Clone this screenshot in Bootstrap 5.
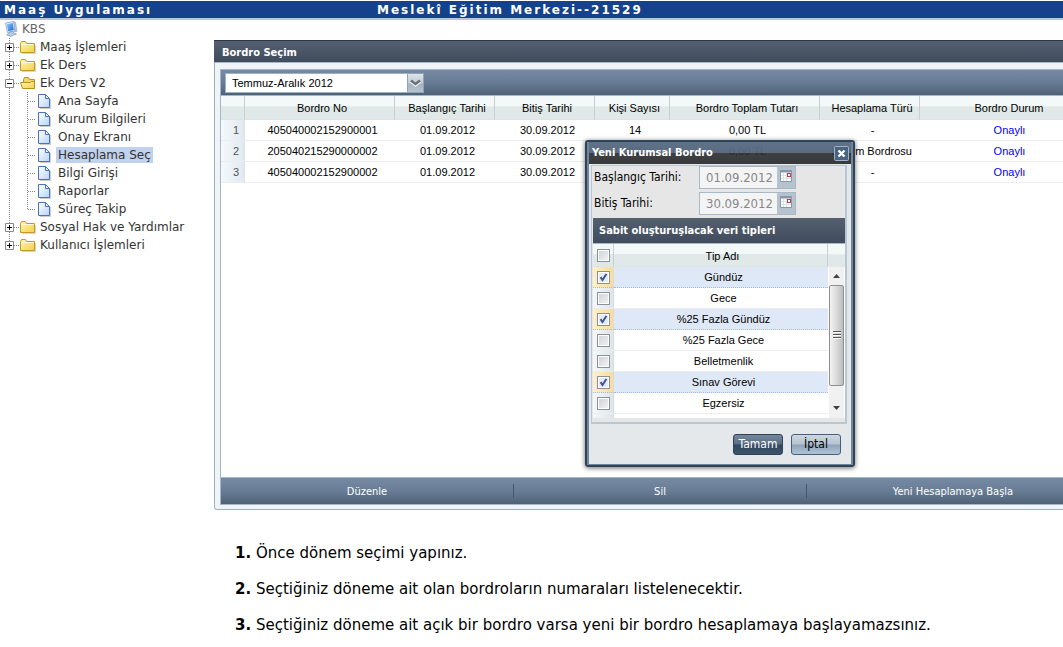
<!DOCTYPE html>
<html lang="tr">
<head>
<meta charset="utf-8">
<meta name="viewport" content="width=device-width, initial-scale=1">
<title>Maaş Uygulaması</title>
<link href="https://cdn.jsdelivr.net/npm/bootstrap@5.3.0/dist/css/bootstrap.min.css" rel="stylesheet">
<style>
:root{--wide:"DejaVu Sans",Verdana,sans-serif;--ui:"DejaVu Sans Condensed",Tahoma,sans-serif;--grid:"Liberation Sans",Arial,sans-serif}
body{font:12px/18px var(--wide);color:#333;background:#fff;overflow-x:hidden}
.topbar{margin-top:1px;height:19px;background:#15428b;border-bottom:2px solid #b5c7e2;color:#fff;font-weight:700;letter-spacing:2px;line-height:19px;padding-left:4px}
.topbar>*{flex:1 1 0;white-space:nowrap}
.topbar>.app-title{flex:0 0 373px}
/* tree menu */
.side{width:214px;flex:none;padding:0 0 0 2px}
.side ul{list-style:none;margin:0;padding:0}
.side a{color:#333;text-decoration:none;white-space:nowrap;line-height:14px}
.side .node a.root{color:#666;margin-left:0}
.node{height:18px;display:flex;align-items:center}
.node svg{flex:none}
.node a{margin-left:2px;padding:0 2px}
.side ul ul a{margin-left:4px}
.node a.current{background:#c1d2ee;padding:1px 2px}
/* panel */
.main{min-width:0;flex:1;overflow:hidden}
.panel{min-width:892px;margin-top:20px;background:#eff4f9;border:1px solid #9fb0bc;border-top:0;border-radius:2px 2px 3px 3px;position:relative;font-family:var(--ui);font-size:11px}
.bar-dark{background:linear-gradient(#54606f,#404c5d);color:#fff;font-weight:700;font-size:11px;margin:0}
.panel-head{height:23px;line-height:23px;padding-left:8px;border-top:1px solid #29394b;border-bottom:1px solid #a3b7c8;margin:0 -1px}
.inner{margin:6px 5px 4px;border:1px solid #a3b7c8;background:#fff}
.bar{background:linear-gradient(#768ba3,#687d95 50%,#4e6177)}
.tools{height:26px;padding:3px 4px;border-bottom:1px solid #a3b7c8}
.combo{width:199px;height:20px;position:relative}
.combo select{width:100%;height:20px;border:1px solid #9db2c3;border-radius:0;background:#fff;font:11px/18px var(--grid);color:#000;padding:0 20px 0 6px;appearance:none}
.combo .trigger{position:absolute;right:0;top:0;width:17px;height:20px;pointer-events:none}
.grid-table{table-layout:fixed;width:100%;margin:0;font:11px/20px var(--grid);color:#000;text-align:center;border-collapse:separate;border-spacing:0}
.grid-table th{height:24px;padding:1px 0 0 5px;font-weight:400;background:linear-gradient(#f3f8f8 45%,#e0e9e7 46%);border-right:1px solid #c9ced1;border-bottom:1px solid #dde4e6}
.grid-table td{height:21px;padding:0 0 0 5px;border-bottom:1px solid #ebedef;white-space:nowrap}
.grid-table .num{background:linear-gradient(90deg,#f5f9fc,#e1e9ef);border-right:1px solid #dbe2e8;color:#555;padding-left:7px}
.grid-table td a{color:#00f;text-decoration:none}
.payrolls th:nth-child(1){width:24px}
.payrolls th:nth-child(2),.payrolls th:nth-child(6){width:150px}
.payrolls th:nth-child(3),.payrolls th:nth-child(4),.payrolls th:nth-child(7){width:100px}
.payrolls th:nth-child(5){width:75px}
.payrolls th:last-child,.payrolls td:last-child{padding:0}
.grid-body{height:381px}
.foot{height:27px;border-top:1px solid #a3b7c8;display:flex;align-items:center}
.foot button{flex:1 1 0;height:14px;line-height:13px;border:0;background:none;color:#fff;padding:0}
.foot button:not(:last-child){border-right:1px solid #42566c}
/* dialog */
.dlg{position:absolute;left:370px;top:100px;width:270px;border:2px solid #304459;border-radius:3px;color:#000;box-shadow:0 1px 5px #0009}
.dlg-frame{border:solid #71869d;border-width:0 2px 1px}
.dlg-head{height:22px;background:linear-gradient(#5e7188,#53657af2 48%,#2a2d31e8 52%,#262626e8);color:#fff;font-weight:700;padding:0 2px 0 3px}
.dlg-head h2{font-size:11px;font-weight:700;margin:0}
.dlg-head button{border:0;padding:0;background:none;width:15px;height:15px;display:flex}
.dlg-main{background:#e4e8eb;padding-top:1px}
.dlg-body{margin:0 4px 0 2px;border:solid #b9c7d3;border-width:1px 2px 2px 1px;background:#e6e6e6;padding:0 0 4px 1px}
.field{height:26px;padding-left:1px}
.field label{width:105px;font-size:12px;line-height:22px;flex:none}
.date-box{width:97px;height:23px;border:1px solid #a9b8c5;background:#f4f4f4}
.date-box input{width:77px;border:0;background:none;color:#888;font:13px/20px var(--ui);padding:1px 0 0 6px}
.date-box .cal{width:18px;background:#b6c2cd;display:flex;justify-content:center;padding-top:2px}
.sub-head{height:26px;line-height:25px;padding-left:6px;border-bottom:1px solid #a3b7c8}
.types{height:174px;overflow:hidden;background:#fff;display:flex;align-items:stretch}
.types-list{width:235px;flex:none;overflow:hidden}
.types .grid-table th{height:23px;padding:1px 0 0 4px}
.types .grid-table th:first-child,.types .grid-table td:first-child{width:21px;padding:0}
.types .grid-table td:first-child{background:linear-gradient(90deg,#f5f8fa,#dde5eb);border-right:1px solid #d5dce2}
.types tr.on td{background:#dfe8f6;border-bottom:1px dotted #a3bae9}
.types .grid-table tr.on td:first-child{background:linear-gradient(90deg,#fdf0cd,#f9dc9a)}
.types input{appearance:none;width:13px;height:13px;border:1px solid #8b9197;background:linear-gradient(135deg,#cdd1d6,#f4f4f4);box-shadow:inset 0 0 0 1px #fff;display:block;margin:1px auto 0;border-radius:0}
.types input:checked{background:url("data:image/svg+xml,%3Csvg xmlns='http://www.w3.org/2000/svg' viewBox='0 0 11 11'%3E%3Cpath d='M2.5 5.2 4.5 8 8.4 2' fill='none' stroke='%233f5791' stroke-width='2'/%3E%3C/svg%3E") #e7ebf2}
.scroll-col{flex:1;display:flex;flex-direction:column}
.scroll-cap{height:23px;flex:none;background:linear-gradient(#f3f8f8 45%,#e0e9e7 46%)}
.track{flex:1;background:#f1f1f1;display:flex;flex-direction:column;margin:0 1px 0 1px}
.track svg{flex:none;margin:auto}
.thumb{height:101px;flex:none;border:1px solid #8f8f8f;border-radius:2px;background:linear-gradient(90deg,#f4f4f4,#dadada 50%,#bdbdbd);display:flex;align-items:center}
.arrow{height:18px;flex:none;display:flex}
.arrow.down{height:32px;align-items:end;padding-bottom:8px}
.arrow.down svg{margin:0 auto}
.dlg-foot{height:40px;padding:0 10px 0 0}
.dlg-foot button{width:50px;height:21px;border:1px solid #2e4358;border-radius:3px;font:12px/18px var(--ui);padding:0;color:#fff;background:linear-gradient(#74879c,#586d84 48%,#33485e 52%,#3c536b)}
.dlg-foot button.cancel{color:#000;border-color:#46607c;background:linear-gradient(#cdd7e1,#b5c3d1 48%,#8fa4b9 52%,#b0c3d6)}
.steps{padding:34px 0 0 21px;font:15px/18px var(--wide);color:#000}
.steps p{margin:0 0 18px}
</style>
</head>
<body>
<svg width="0" height="0" class="position-absolute" aria-hidden="true">
<defs>
<linearGradient id="gf" x2="1" y2="1"><stop stop-color="#fff7b0"/><stop offset="1" stop-color="#f5cf4c"/></linearGradient>
<linearGradient id="gp" x2="1" y2="1"><stop stop-color="#fff"/><stop offset="1" stop-color="#b9d3f8"/></linearGradient>
<linearGradient id="gs" x2="1" y2="1"><stop stop-color="#8fd0ff"/><stop offset="1" stop-color="#1a62d0"/></linearGradient>
<symbol id="folder" viewBox="0 0 16 16"><path d="M2 14.500h13.500V6" fill="none" stroke="#c4b88e" opacity=".6"/><path d="M.5 4.500 1.500 2.500h4l1 2h8v9H.5z" fill="url(#gf)" stroke="#c29a2b"/><path d="M1.500 5.500h12" stroke="#fffbd8"/></symbol>
<symbol id="folder-open" viewBox="0 0 16 16"><path d="M3.500 13V4.500l1-2h4l1 2h5V13z" fill="#f4d568" stroke="#b98f24"/><path d="M.5 7.500h10l1-1h3v7h-12z" fill="url(#gf)" stroke="#b98f24"/></symbol>
<symbol id="page" viewBox="0 0 16 16"><path d="M4 15.500h10.500V6" fill="none" stroke="#999" opacity=".5"/><path d="M2.500 1.500h7l4 4v9h-11z" fill="url(#gp)" stroke="#4a74b8"/><path d="M9.500 1.500v4h4z" fill="#e9f2ff" stroke="#4a74b8"/></symbol>
<symbol id="plus" viewBox="0 0 18 18"><path d="M7.500 0v18M12 9.500h6" stroke="#888" stroke-dasharray="1 1"/><path d="M3.500 5.500h8v8h-8z" fill="#fff" stroke="#888"/><path d="M5 9.500h5M7.500 7v5" stroke="#000"/></symbol>
<symbol id="plus-last" viewBox="0 0 18 18"><path d="M7.500 0v9M12 9.500h6" stroke="#888" stroke-dasharray="1 1"/><path d="M3.500 5.500h8v8h-8z" fill="#fff" stroke="#888"/><path d="M5 9.500h5M7.500 7v5" stroke="#000"/></symbol>
<symbol id="minus" viewBox="0 0 18 18"><path d="M7.500 0v18M12 9.500h6" stroke="#888" stroke-dasharray="1 1"/><path d="M3.500 5.500h8v8h-8z" fill="#fff" stroke="#888"/><path d="M5 9.500h5" stroke="#000"/></symbol>
<symbol id="branch" viewBox="0 0 36 18"><path d="M7.500 0v18M25.500 0v18M26 9.500h10" stroke="#888" stroke-dasharray="1 1"/></symbol>
<symbol id="branch-last" viewBox="0 0 36 18"><path d="M7.500 0v18M25.500 0v10M26 9.500h10" stroke="#888" stroke-dasharray="1 1"/></symbol>
<symbol id="cal" viewBox="0 0 14 14"><path d="M1.500 1.500h11v11h-11z" fill="#fff" stroke="#8998a8"/><path d="M1 2.500h12" stroke="#8998a8" stroke-width="2"/><path d="M4.500 4v8M7.500 4v8M2 6.500h10M2 9.500h10" stroke="#dde2e8"/><rect x="8.500" y="4.500" width="3" height="3" fill="#fff" stroke="#b5433f"/></symbol>
</defs>
</svg>

<header class="topbar d-flex"><span class="app-title">Maaş Uygulaması</span><span>Meslekî Eğitim Merkezi--21529</span></header>

<div class="d-flex">
<nav class="side">
<ul>
<li class="node"><svg width="18" height="16" viewBox="0 0 18 16"><path d="m11 .5 2.500.8 1.500 9-2.500.7z" fill="#b9c5d3" stroke="#93a5b9" stroke-width=".6"/><path d="M3.500 2.200 11.500.5l1.300 9.300-7.300 1.700z" fill="#e6eef8" stroke="#7fa5d2" stroke-width=".8"/><path d="M4.800 3.200 10.700 2l1 7-5.400 1.300z" fill="url(#gs)"/><path d="m8 11 3-.7.8 1.700 2.700 1-6 2.500-4-1.600z" fill="#b7cbe2" stroke="#7393b5" stroke-width=".6"/></svg><a class="root" href="#">KBS</a></li>
<li class="node"><svg width="18" height="18"><use href="#plus"/></svg><svg width="16" height="16"><use href="#folder"/></svg><a href="#">Maaş İşlemleri</a></li>
<li class="node"><svg width="18" height="18"><use href="#plus"/></svg><svg width="16" height="16"><use href="#folder"/></svg><a href="#">Ek Ders</a></li>
<li><div class="node"><svg width="18" height="18"><use href="#minus"/></svg><svg width="16" height="16"><use href="#folder-open"/></svg><a href="#">Ek Ders V2</a></div>
<ul>
<li class="node"><svg width="34" height="18"><use href="#branch" width="36" height="18"/></svg><svg width="16" height="16"><use href="#page"/></svg><a href="#">Ana Sayfa</a></li>
<li class="node"><svg width="34" height="18"><use href="#branch" width="36" height="18"/></svg><svg width="16" height="16"><use href="#page"/></svg><a href="#">Kurum Bilgileri</a></li>
<li class="node"><svg width="34" height="18"><use href="#branch" width="36" height="18"/></svg><svg width="16" height="16"><use href="#page"/></svg><a href="#">Onay Ekranı</a></li>
<li class="node"><svg width="34" height="18"><use href="#branch" width="36" height="18"/></svg><svg width="16" height="16"><use href="#page"/></svg><a class="current" href="#">Hesaplama Seç</a></li>
<li class="node"><svg width="34" height="18"><use href="#branch" width="36" height="18"/></svg><svg width="16" height="16"><use href="#page"/></svg><a href="#">Bilgi Girişi</a></li>
<li class="node"><svg width="34" height="18"><use href="#branch" width="36" height="18"/></svg><svg width="16" height="16"><use href="#page"/></svg><a href="#">Raporlar</a></li>
<li class="node"><svg width="34" height="18"><use href="#branch-last" width="36" height="18"/></svg><svg width="16" height="16"><use href="#page"/></svg><a href="#">Süreç Takip</a></li>
</ul></li>
<li class="node"><svg width="18" height="18"><use href="#plus"/></svg><svg width="16" height="16"><use href="#folder"/></svg><a href="#">Sosyal Hak ve Yardımlar</a></li>
<li class="node"><svg width="18" height="18"><use href="#plus-last"/></svg><svg width="16" height="16"><use href="#folder"/></svg><a href="#">Kullanıcı İşlemleri</a></li>
</ul>
</nav>

<main class="main">
<section class="panel">
<h1 class="bar-dark panel-head">Bordro Seçim</h1>
<div class="inner">
<div class="bar tools"><div class="combo"><select aria-label="Dönem"><option>Temmuz-Aralık 2012</option></select>
<svg class="trigger" viewBox="0 0 17 20"><defs><linearGradient id="gt" y2="1" x2="0"><stop stop-color="#dfe6ea"/><stop offset=".5" stop-color="#c0cbd4"/><stop offset=".55" stop-color="#a3b3c1"/><stop offset="1" stop-color="#b9c6d0"/></linearGradient></defs><path d="M.5.5h16v19H.5z" fill="url(#gt)" stroke="#8fa5b6"/><path d="M4 8.500 8.500 12 13 8.500" fill="none" stroke="#eef2f5" stroke-width="3"/><path d="M4 7.500 8.500 11 13 7.500" fill="none" stroke="#6d7175" stroke-width="2.500"/></svg></div></div>
<div class="grid-body">
<table class="grid-table payrolls">
<thead><tr><th></th><th>Bordro No</th><th>Başlangıç Tarihi</th><th>Bitiş Tarihi</th><th>Kişi Sayısı</th><th>Bordro Toplam Tutarı</th><th>Hesaplama Türü</th><th>Bordro Durum</th></tr></thead>
<tbody>
<tr><td class="num">1</td><td>405040002152900001</td><td>01.09.2012</td><td>30.09.2012</td><td>14</td><td>0,00 TL</td><td>-</td><td><a href="#">Onaylı</a></td></tr>
<tr><td class="num">2</td><td>205040215290000002</td><td>01.09.2012</td><td>30.09.2012</td><td>17</td><td>0,00 TL</td><td class="text-end pe-2">Durum Bordrosu</td><td><a href="#">Onaylı</a></td></tr>
<tr><td class="num">3</td><td>405040002152900002</td><td>01.09.2012</td><td>30.09.2012</td><td></td><td></td><td>-</td><td><a href="#">Onaylı</a></td></tr>
</tbody>
</table>
</div>
<div class="bar foot"><button type="button">Düzenle</button><button type="button">Sil</button><button type="button">Yeni Hesaplamaya Başla</button></div>
</div>

<div class="dlg" role="dialog" aria-labelledby="dlgTitle">
<div class="dlg-frame">
<div class="dlg-head d-flex align-items-center justify-content-between"><h2 id="dlgTitle">Yeni Kurumsal Bordro</h2>
<button type="button" aria-label="Kapat"><svg width="15" height="15" viewBox="0 0 15 15"><rect x=".5" y=".5" width="14" height="14" rx="1" fill="#4a6480" stroke="#9cb3c9"/><path d="m4.500 4.500 6 6m0-6-6 6" stroke="#fff" stroke-width="2.400"/></svg></button></div>
<div class="dlg-main">
<div class="dlg-body">
<div class="field d-flex align-items-start"><label for="d1">Başlangıç Tarihi:</label><div class="date-box d-flex"><input id="d1" type="text" value="01.09.2012" disabled><span class="cal"><svg width="14" height="14"><use href="#cal"/></svg></span></div></div>
<div class="field d-flex align-items-start"><label for="d2">Bitiş Tarihi:</label><div class="date-box d-flex"><input id="d2" type="text" value="30.09.2012" disabled><span class="cal"><svg width="14" height="14"><use href="#cal"/></svg></span></div></div>
<h3 class="bar-dark sub-head">Sabit oluşturuşlacak veri tipleri</h3>
<div class="types">
<div class="types-list">
<table class="grid-table">
<thead><tr><th><input type="checkbox" aria-label="Tümü"></th><th>Tip Adı</th></tr></thead>
<tbody>
<tr class="on"><td><input type="checkbox" id="t1" checked></td><td><label for="t1">Gündüz</label></td></tr>
<tr><td><input type="checkbox" id="t2"></td><td><label for="t2">Gece</label></td></tr>
<tr class="on"><td><input type="checkbox" id="t3" checked></td><td><label for="t3">%25 Fazla Gündüz</label></td></tr>
<tr><td><input type="checkbox" id="t4"></td><td><label for="t4">%25 Fazla Gece</label></td></tr>
<tr><td><input type="checkbox" id="t5"></td><td><label for="t5">Belletmenlik</label></td></tr>
<tr class="on"><td><input type="checkbox" id="t6" checked></td><td><label for="t6">Sınav Görevi</label></td></tr>
<tr><td><input type="checkbox" id="t7"></td><td><label for="t7">Egzersiz</label></td></tr>
<tr><td></td><td></td></tr>
</tbody>
</table>
</div>
<div class="scroll-col"><div class="scroll-cap"></div>
<div class="track"><div class="arrow"><svg width="7" height="4"><path d="M0 4h7L3.500 0z" fill="#444"/></svg></div>
<div class="thumb"><svg width="8" height="9"><path d="M0 .5h8M0 3.500h8M0 6.500h8" stroke="#555"/><path d="M0 1.500h8M0 4.500h8M0 7.500h8" stroke="#fff"/></svg></div>
<div class="arrow down"><svg width="7" height="4"><path d="M0 0h7L3.500 4z" fill="#444"/></svg></div></div></div>
</div>
</div>
<div class="dlg-foot d-flex justify-content-end align-items-center gap-2"><button type="button">Tamam</button><button type="button" class="cancel">İptal</button></div>
</div>
</div>
</div>
</section>

<section class="steps">
<p><b>1.</b> Önce dönem seçimi yapınız.</p>
<p><b>2.</b> Seçtiğiniz döneme ait olan bordroların numaraları listelenecektir.</p>
<p class="mb-0"><b>3.</b> Seçtiğiniz döneme ait açık bir bordro varsa yeni bir bordro hesaplamaya başlayamazsınız.</p>
</section>
</main>
</div>
<script src="https://cdn.jsdelivr.net/npm/bootstrap@5.3.0/dist/js/bootstrap.bundle.min.js"></script>
</body>
</html>
